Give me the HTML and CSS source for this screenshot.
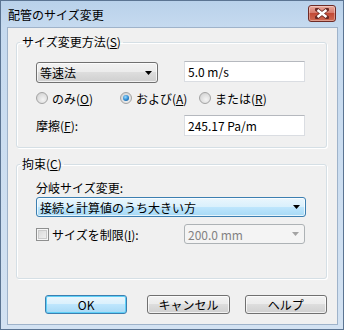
FILE: index.html
```html
<!DOCTYPE html>
<html lang="ja">
<head>
<meta charset="UTF-8">
<title>配管のサイズ変更</title>
<link rel="stylesheet" href="styles.css">
</head>
<body>

<div class="window">
    <div class="titlebar">
        <span class="title">配管のサイズ変更</span>
        <div class="close">
            <svg width="14" height="11" viewBox="0 0 14 11">
                <path d="M2 1.5 L12 9.5 M12 1.5 L2 9.5" stroke="#6b2a24" stroke-width="4" stroke-linecap="square"/>
                <path d="M2.5 2 L11.5 9 M11.5 2 L2.5 9" stroke="#ffffff" stroke-width="2.4"/>
            </svg>
        </div>
    </div>

    <div class="client">
        <fieldset class="group group-method">
            <legend>サイズ変更方法(<u>S</u>)</legend>
            <div class="row first">
                <div class="combo">
                    <span>等速法</span>
                    <svg class="arrow" width="7" height="4" viewBox="0 0 7 4"><path d="M0 0 H7 L3.5 4 Z" fill="#000"/></svg>
                </div>
                <div class="textbox">5.0 m/s</div>
            </div>
            <div class="radios">
                <label class="radio only"><span class="dot"></span>のみ(<u>O</u>)</label>
                <label class="radio both"><span class="dot checked"></span>および(<u>A</u>)</label>
                <label class="radio"><span class="dot"></span>または(<u>R</u>)</label>
            </div>
            <div class="row">
                <span class="label">摩擦(<u>F</u>):</span>
                <div class="textbox">245.17 Pa/m</div>
            </div>
        </fieldset>

        <fieldset class="group group-limit">
            <legend>拘束(<u>C</u>)</legend>
            <div class="label caption">分岐サイズ変更:</div>
            <div class="combo combo-hot">
                <span>接続と計算値のうち大きい方</span>
                <svg class="arrow" width="7" height="4" viewBox="0 0 7 4"><path d="M0 0 H7 L3.5 4 Z" fill="#000"/></svg>
            </div>
            <div class="row limit-row">
                <label class="check"><span class="box"></span>サイズを制限(<u>I</u>):</label>
                <div class="combo combo-disabled">
                    <span>200.0 mm</span>
                    <svg class="arrow" width="7" height="4" viewBox="0 0 7 4"><path d="M0 0 H7 L3.5 4 Z" fill="#a3a3a3"/></svg>
                </div>
            </div>
        </fieldset>

        <div class="buttons">
            <button class="btn btn-default">OK</button>
            <button class="btn btn-cancel">キャンセル</button>
            <button class="btn btn-help">ヘルプ</button>
        </div>
    </div>
</div>

</body>
</html>
```

FILE: styles.css
```css
body {
    margin: 0;
    font-family: "Noto Sans CJK JP", sans-serif;
    font-size: 12px;
    color: #000;
    background-color: #ffffff;
}
.window {
    width: 344px;
    height: 330px;
    box-sizing: border-box;
    border: 1px solid #5b7492;
    background: linear-gradient(to bottom, #b9d1ea 0, #c6daef 26px, #d3e2f2 100%);
    padding: 0 5px 4px 6px;
    display: flex;
    flex-direction: column;
}
.titlebar {
    height: 26px;
    display: flex;
    justify-content: space-between;
    align-items: flex-start;
    padding: 0 2px 0 1px;
}
.title {
    margin-top: 6px;
    line-height: 16px;
    font-size: 12px;
    color: #000;
}
.close {
    margin-top: 4px;
    width: 28px;
    height: 17px;
    box-sizing: border-box;
    border: 1px solid #6e2b27;
    border-radius: 3px;
    background: linear-gradient(to bottom, #e9a99c 0%, #d77b6c 45%, #c24a36 50%, #cf6a52 100%);
    box-shadow: inset 0 0 0 1px rgba(255, 255, 255, 0.35);
    display: flex;
    align-items: center;
    justify-content: center;
}
.client {
    flex-grow: 1;
    background-color: #f0f0f0;
    border: 1px solid #9fb3ca;
    padding: 7px 10px 0 8px;
}
.group {
    margin: 0;
    border: 1px solid #d5dfe5;
    border-radius: 3px;
    box-shadow: inset 1px 1px 0 #ffffff, 1px 1px 0 #ffffff;
    padding: 0 21px 0 19px;
    min-width: 0;
}
.group legend {
    margin-left: -16px;
    padding: 0 2px;
    line-height: 14px;
}
.group-method {
    padding-top: 12px;
    padding-bottom: 11px;
}
.group-limit {
    margin-top: 9px;
    padding-top: 10px;
    padding-bottom: 34px;
}
.row {
    display: flex;
    align-items: center;
    justify-content: space-between;
}
.row.first {
    align-items: flex-start;
}
.row.first .combo {
    margin-top: 1px;
}
.textbox {
    width: 121px;
    height: 21px;
    box-sizing: border-box;
    background-color: #ffffff;
    border: 1px solid #dadde2;
    border-top-color: #b5b8be;
    padding: 0 3px;
    line-height: 19px;
}
.combo {
    width: 122px;
    height: 21px;
    box-sizing: border-box;
    border: 1px solid #707070;
    border-radius: 3px;
    background: linear-gradient(to bottom, #f2f2f2 0%, #ebebeb 50%, #dddddd 50%, #cfcfcf 100%);
    box-shadow: inset 0 0 0 1px rgba(255, 255, 255, 0.7);
    display: flex;
    align-items: center;
    justify-content: space-between;
    padding: 0 3px 0 3px;
}
.combo .arrow {
    margin-right: 2px;
}
.combo-hot {
    width: 270px;
    height: 20px;
    margin-top: 2px;
    border-color: #3c7fb1;
    background: linear-gradient(to bottom, #eaf6fd 0%, #d9f0fc 50%, #bee6fd 50%, #a7d9f5 100%);
}
.combo-disabled {
    width: 121px;
    height: 20px;
    border-color: #adb2b5;
    background: #f4f4f4;
    box-shadow: none;
    color: #838383;
}
.radios {
    display: flex;
    align-items: center;
    height: 16px;
    margin-top: 7px;
    margin-bottom: 9px;
}
.radio {
    display: flex;
    align-items: center;
}
.radio.only {
    width: 84px;
}
.radio.both {
    width: 79px;
}
.dot {
    width: 12px;
    height: 12px;
    box-sizing: border-box;
    border-radius: 50%;
    border: 1px solid #a3a3a3;
    background: radial-gradient(circle at 60% 65%, #f4f4f4 0%, #dcdcdc 60%, #c9c9c9 100%);
    margin-right: 4px;
    display: flex;
    align-items: center;
    justify-content: center;
}
.dot.checked::after {
    content: "";
    width: 6px;
    height: 6px;
    border-radius: 50%;
    background: radial-gradient(circle at 40% 35%, #9bdcff 0%, #2a86cf 55%, #134d80 100%);
}
.label {
    line-height: 16px;
}
.caption {
    line-height: 14px;
}
.limit-row {
    margin-top: 7px;
}
.check {
    display: flex;
    align-items: center;
}
.box {
    width: 13px;
    height: 13px;
    box-sizing: border-box;
    border: 1px solid #8e8f8f;
    background: linear-gradient(135deg, #d6d6d6 0%, #f4f4f4 100%);
    box-shadow: inset 0 0 0 1px #f6f6f6, inset 0 0 0 2px #cbcbcb;
    margin-right: 3px;
}
.buttons {
    display: flex;
    margin-top: 16px;
    padding-left: 29px;
}
.btn {
    width: 86px;
    height: 19px;
    box-sizing: border-box;
    font-family: inherit;
    font-size: 12px;
    line-height: 15px;
    padding: 0;
    color: #000;
    border: 1px solid #707070;
    border-radius: 3px;
    background: linear-gradient(to bottom, #f2f2f2 0%, #ebebeb 50%, #dddddd 50%, #cfcfcf 100%);
    box-shadow: inset 0 0 0 1px rgba(255, 255, 255, 0.7);
}
.btn-default {
    border-color: #3c7fb1;
    background: linear-gradient(to bottom, #eaf6fd 0%, #d9f0fc 50%, #bee6fd 50%, #a7d9f5 100%);
    box-shadow: inset 0 0 0 1px #5fd0f7;
}
.btn-cancel {
    margin-left: 20px;
}
.btn-help {
    margin-left: 15px;
}
```
